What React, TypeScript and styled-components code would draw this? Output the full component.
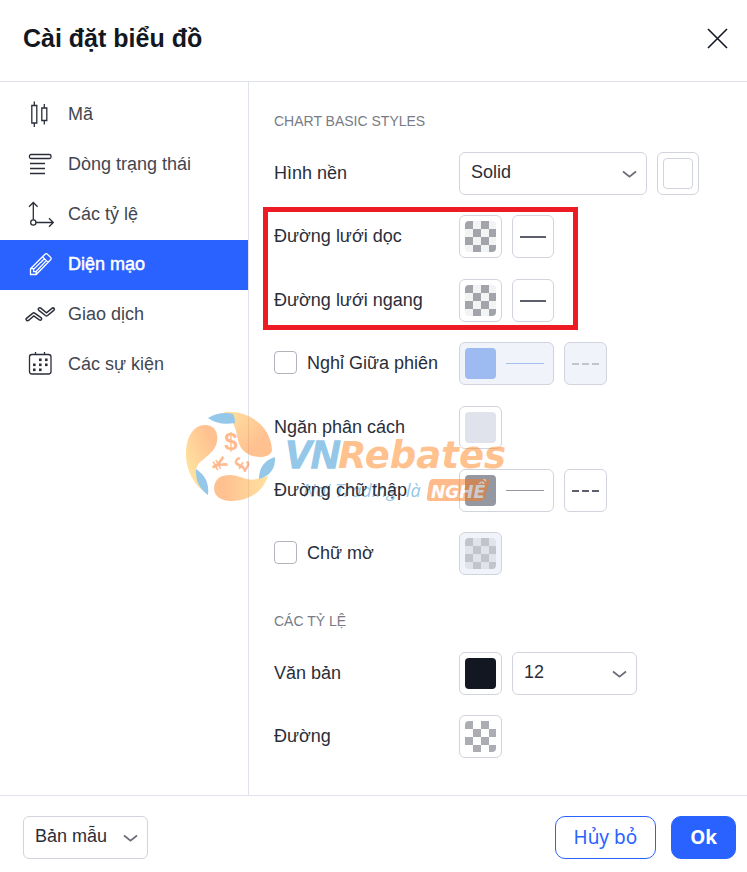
import React from "react";
import styled, { createGlobalStyle, css } from "styled-components";

const GlobalStyle = createGlobalStyle`
  *, *::before, *::after { box-sizing: border-box; }
  body {
    margin: 0;
    background: #fff;
    color: #2a2e39;
    font-family: "Liberation Sans", Arial, sans-serif;
    font-size: 18px;
    line-height: 24px;
  }
  button, select, input { font: inherit; color: inherit; margin: 0; }
`;

const Dialog = styled.div`
  position: relative;
  display: flex;
  flex-direction: column;
  min-height: 100vh;
`;

const Header = styled.header`
  display: flex;
  align-items: center;
  justify-content: space-between;
  padding: 20px 16px 24px 23px;
  border-bottom: 1px solid #e0e3eb;
`;

const Title = styled.h1`
  margin: 0;
  font-size: 25px;
  line-height: 37px;
  font-weight: 700;
  color: #131722;
`;

const CloseButton = styled.button`
  display: flex;
  padding: 3px;
  border: 0;
  background: none;
  color: #131722;
  cursor: pointer;
`;

const Body = styled.div`
  flex: 1;
  display: grid;
  grid-template-columns: 249px minmax(0, 1fr);
`;

const Sidebar = styled.nav`
  display: flex;
  flex-direction: column;
  padding-top: 8px;
  border-right: 1px solid #e0e3eb;
`;

const NavItem = styled.button<{ $active?: boolean }>`
  display: grid;
  grid-template-columns: 32px 1fr;
  align-items: center;
  gap: 12px;
  height: 50px;
  padding: 0 12px 2px 24px;
  border: 0;
  text-align: left;
  cursor: pointer;
  background: ${(p) => (p.$active ? "#2962ff" : "transparent")};
  color: ${(p) => (p.$active ? "#fff" : "#434651")};
  -webkit-text-stroke: ${(p) => (p.$active ? "0.5px #fff" : "0")};

  svg { color: ${(p) => (p.$active ? "#fff" : "#2a2e39")}; }
`;

const Content = styled.main`
  display: flex;
  flex-direction: column;
  gap: 20px;
  padding: 29px 25px 36px;
`;

const SectionTitle = styled.h2`
  margin: 0;
  font-size: 14px;
  line-height: 21px;
  font-weight: 400;
  color: #787b86;
`;

const SecondTitle = styled(SectionTitle)`
  margin-top: 16px;
`;

const Group = styled.div`
  position: relative;
  display: flex;
  flex-direction: column;
  gap: 21px;
  align-self: flex-start;
`;

const Highlight = styled.span`
  position: absolute;
  inset: -8px -24px -8px -11px;
  border: 5px solid #ed1c24;
  pointer-events: none;
`;

const Row = styled.div`
  display: grid;
  grid-template-columns: 185px auto;
  align-items: center;
  justify-content: start;
`;

const Label = styled.label`
  position: relative;
  z-index: 2;
  display: flex;
  align-items: center;
  gap: 10px;
  padding-bottom: 2px;
`;

const Checkbox = styled.input`
  appearance: none;
  width: 23px;
  height: 23px;
  border: 1px solid #b2b5be;
  border-radius: 4px;
  background: #fff;
  cursor: pointer;

  &:checked { background: #2962ff; }
`;

const Controls = styled.div`
  display: flex;
  gap: 10px;
`;

const box = css`
  height: 43px;
  border: 1px solid #d1d4dc;
  border-radius: 6px;
  background: #fff;
`;

const BoxButton = styled.button<{ $size?: "wide" | "narrow" }>`
  ${box}
  display: flex;
  align-items: center;
  justify-content: ${(p) => (p.$size === "wide" ? "flex-start" : "center")};
  gap: 10px;
  width: ${(p) => (p.$size === "wide" ? "95px" : p.$size === "narrow" ? "42px" : "43px")};
  padding: 0 5px;
  cursor: pointer;

  &:disabled { background: #f0f3fa; cursor: default; }
`;

const Swatch = styled.span<{ $color: string; $outlined?: boolean }>`
  flex: none;
  width: ${(p) => (p.$outlined ? "30px" : "31px")};
  height: 31px;
  border-radius: 4px;
  background: ${(p) => p.$color};
  border: ${(p) => (p.$outlined ? "1px solid #d1d4dc" : "0")};
`;

const Checker = styled(Swatch)<{ $dark: string }>`
  background: repeating-conic-gradient(${(p) => p.$color} 0 25%, ${(p) => p.$dark} 0 50%) 0 0 / 16px 16px;
`;

const Stroke = styled.span<{ $color: string; $thin?: boolean }>`
  width: ${(p) => (p.$thin ? "38px" : "26px")};
  border-top: ${(p) => (p.$thin ? "1px" : "2px")} solid ${(p) => p.$color};
`;

const Dashes = styled.span<{ $color: string }>`
  flex: none;
  width: 27px;
  height: 2px;
  background: repeating-linear-gradient(90deg, ${(p) => p.$color} 0 7px, transparent 7px 10px);
`;

const SelectFrame = styled.div<{ $width: number }>`
  position: relative;
  width: ${(p) => p.$width}px;

  svg {
    position: absolute;
    right: 10px;
    top: 18px;
    pointer-events: none;
  }
`;

const Select = styled.select`
  ${box}
  appearance: none;
  display: block;
  width: 100%;
  padding: 0 28px 3px 11px;
  cursor: pointer;
`;

const Footer = styled.footer`
  display: flex;
  align-items: center;
  justify-content: space-between;
  padding: 20px 11px 13px 23px;
  border-top: 1px solid #e0e3eb;
`;

const Actions = styled.div`
  display: flex;
  gap: 15px;
`;

const ActionButton = styled.button<{ $primary?: boolean }>`
  height: 43px;
  padding: 0 18px 2px;
  border: 1px solid #2962ff;
  border-radius: 10px;
  font-family: "Noto Sans", sans-serif;
  font-size: 19px;
  font-weight: ${(p) => (p.$primary ? 700 : 400)};
  background: ${(p) => (p.$primary ? "#2962ff" : "#fff")};
  color: ${(p) => (p.$primary ? "#fff" : "#2962ff")};
  cursor: pointer;
`;

const WatermarkLayer = styled.svg`
  position: absolute;
  left: 184px;
  top: 408px;
  z-index: 1;
  opacity: 0.5;
  pointer-events: none;
`;

const Icon = ({ children }: { children: React.ReactNode }) => (
  <svg width="32" height="32" viewBox="0 0 32 32" fill="none" stroke="currentColor" strokeWidth="1.3" aria-hidden="true">
    {children}
  </svg>
);

const CandlesIcon = () => (
  <Icon>
    <path d="M7.8 7.5h5v17.5h-5zM10.3 3.5v4M10.3 25v4M17.8 10h5v12.500h-5zM20.300 6v4M20.300 22.500v4" />
  </Icon>
);

const StatusIcon = () => (
  <Icon>
    <rect x="5.500" y="6.500" width="21.500" height="4" rx="1.500" />
    <path d="M6 15.500h15M6 20.500h15M6 25.500h15" />
  </Icon>
);

const ScalesIcon = () => (
  <Icon>
    <circle cx="9.300" cy="24.500" r="2.600" />
    <path d="M9.300 21.800V4.500M5 8.800l4.300-4.300 4.300 4.300M12 24.500h17M25 20.200l4.300 4.300-4.300 4.300" />
  </Icon>
);

const PencilIcon = () => (
  <Icon>
    <path d="M6.500 26.500v-5.800L21 6.200q1.200-1.200 2.400 0l3.200 3.200q1.200 1.200 0 2.400L12.200 26.500zM18.500 8.800l5.600 5.600M9.600 21.400L20.400 10.700M11.900 23.700L22.300 12.600M6.800 20.700h2.800v2.900h2.600v2.700" />
  </Icon>
);

const TradeIcon = () => (
  <Icon>
    <path strokeWidth="1.500" d="M2.500 20.300 8.600 15.300q1.200-.9 2.400 0l6 4.300q1.200 1 .4 2t-2.100.2L9.800 18l-5 4.200q-1.300 1-2.400-.1-.9-1 .1-1.800z" />
    <path strokeWidth="1.500" d="M14.700 10.300q1-1 2.100-.1l5.700 4.600 5.400-4.500q1.200-.9 2.200.1.800 1-.3 1.900l-6.200 5.200q-1.100.8-2.200 0l-6.500-5.200q-1.200-1-.2-2z" />
  </Icon>
);

const CalendarIcon = () => (
  <Icon>
    <rect x="5.500" y="6.500" width="21.500" height="19.500" rx="2.500" />
    <path d="M11.500 4v3M20.500 4v3" />
    <g fill="currentColor" stroke="none">
      {[[15, 10.5], [21, 10.5], [9, 15.5], [15, 15.5], [21, 15.5], [9, 20.5], [15, 20.5]].map(([x, y]) => (
        <rect key={`${x}-${y}`} x={x} y={y} width="2.600" height="2.600" />
      ))}
    </g>
  </Icon>
);

const Chevron = () => (
  <svg width="15" height="9" viewBox="0 0 15 9" fill="none" stroke="#6a6d78" strokeWidth="1.700" aria-hidden="true">
    <path d="M1 1.500l6.500 5.200L14 1.500" />
  </svg>
);

const Watermark = () => (
  <WatermarkLayer width="330" height="98" viewBox="0 0 330 98" aria-label="VNRebates">
    <defs>
      <linearGradient id="flame-top" x1="0" y1="0" x2="1" y2="1">
        <stop offset="0" stopColor="#ffc444" />
        <stop offset="0.700" stopColor="#ff8424" />
      </linearGradient>
      <linearGradient id="flame-left" x1="1" y1="0" x2="0" y2="1">
        <stop offset="0.200" stopColor="#ff8424" />
        <stop offset="0.800" stopColor="#ffc444" />
      </linearGradient>
      <linearGradient id="flame-bottom" x1="0" y1="0" x2="1" y2="0">
        <stop offset="0.200" stopColor="#ff8424" />
        <stop offset="1" stopColor="#ffc444" />
      </linearGradient>
    </defs>
    <path fill="url(#flame-top)" d="M40 4C66 2 87 19 88 42 87 50 73 51 64 46 50 38 56 24 47 12z" />
    <path fill="url(#flame-left)" d="M21 17C31 17 36 26 32 37 27 50 13 51 12 63L18 82C1 68-1 43 5 29 9 21 14 17 21 17z" />
    <path fill="url(#flame-bottom)" d="M30 80C31 70 37 67 46 67 57 67 64 75 76 70L84 68C79 84 65 93 47 93 37 93 30 88 30 80z" />
    <path fill="#2b91d3" d="M24 10Q36 3 49 6 51 9 51 15 35 18 24 10z" />
    <path fill="#2b91d3" d="M91 49Q92 66 75 71 75 54 91 49z" />
    <path fill="#2b91d3" d="M12 61Q26 70 24 87 11 78 12 61z" />
    <g fill="#ff7620" fontFamily="Liberation Sans, sans-serif" fontWeight="700" textAnchor="middle">
      <text x="47" y="42" fontSize="24">$</text>
      <text x="35" y="63" fontSize="21" transform="rotate(62 35 56)">¥</text>
      <text x="58" y="63" fontSize="21" transform="rotate(-60 58 56)">£</text>
    </g>
    <text x="101" y="60" fill="#2b91d3" fontFamily="Liberation Sans, sans-serif" fontWeight="700" fontStyle="italic" fontSize="39" stroke="#2b91d3" strokeWidth="1.500">
      VN
    </text>
    <text x="154" y="60" fill="#ff8420" fontFamily="DejaVu Sans, sans-serif" fontWeight="700" fontStyle="italic" fontSize="37">
      Rebates
    </text>
    <g fill="#2b91d3" fontFamily="Open Sans, sans-serif" fontStyle="italic" fontSize="18">
      <text x="119" y="89">Nơi Trading</text>
      <text x="222" y="89">là</text>
    </g>
    <path fill="#ff7a1a" d="M249 71h53q4 0 3 4l-4 14q-1 4-5 4h-50q-4 0-3-4l2-14q1-4 4-4z" />
    <text x="247" y="90" fill="#fff" fontFamily="DejaVu Sans, sans-serif" fontWeight="700" fontStyle="italic" fontSize="17">
      NGHỀ
    </text>
  </WatermarkLayer>
);

const navItems = [
  { label: "Mã", icon: <CandlesIcon /> },
  { label: "Dòng trạng thái", icon: <StatusIcon /> },
  { label: "Các tỷ lệ", icon: <ScalesIcon /> },
  { label: "Diện mạo", icon: <PencilIcon />, active: true },
  { label: "Giao dịch", icon: <TradeIcon /> },
  { label: "Các sự kiện", icon: <CalendarIcon /> },
];

const Dropdown = ({ id, width, options, label }: { id?: string; width: number; options: string[]; label?: string }) => (
  <SelectFrame $width={width}>
    <Select id={id} aria-label={label}>
      {options.map((o) => (
        <option key={o}>{o}</option>
      ))}
    </Select>
    <Chevron />
  </SelectFrame>
);

const GridLineRow = ({ id, label }: { id: string; label: string }) => (
  <Row>
    <Label htmlFor={id}>{label}</Label>
    <Controls>
      <BoxButton id={id}>
        <Checker $color="#f2f4f3" $dark="#a3a4aa" />
      </BoxButton>
      <BoxButton $size="narrow" aria-label={`${label} – kiểu`}>
        <Stroke $color="#5d606b" />
      </BoxButton>
    </Controls>
  </Row>
);

export default function App() {
  return (
    <Dialog role="dialog" aria-labelledby="dialog-title">
      <GlobalStyle />
      <Header>
        <Title id="dialog-title">Cài đặt biểu đồ</Title>
        <CloseButton aria-label="Đóng">
          <svg width="21" height="21" viewBox="0 0 21 21" stroke="currentColor" strokeWidth="1.600" aria-hidden="true">
            <path d="M1 1l19 19M20 1L1 20" />
          </svg>
        </CloseButton>
      </Header>
      <Body>
        <Sidebar>
          {navItems.map((item) => (
            <NavItem key={item.label} $active={item.active} aria-current={item.active ? "page" : undefined}>
              {item.icon}
              <span>{item.label}</span>
            </NavItem>
          ))}
        </Sidebar>
        <Content>
          <SectionTitle>CHART BASIC STYLES</SectionTitle>
          <Row>
            <Label htmlFor="background">Hình nền</Label>
            <Controls>
              <Dropdown id="background" width={188} options={["Solid", "Gradient"]} />
              <BoxButton $size="narrow" aria-label="Màu nền">
                <Swatch $color="#fff" $outlined />
              </BoxButton>
            </Controls>
          </Row>
          <Group>
            <GridLineRow id="vertical" label="Đường lưới dọc" />
            <GridLineRow id="horizontal" label="Đường lưới ngang" />
            <Highlight />
          </Group>
          <Group>
            <Row>
              <Label>
                <Checkbox type="checkbox" />
                Nghỉ Giữa phiên
              </Label>
              <Controls>
                <BoxButton $size="wide" disabled aria-label="Màu nghỉ giữa phiên">
                  <Swatch $color="#9dbbf0" />
                  <Stroke $thin $color="#a9bfed" />
                </BoxButton>
                <BoxButton disabled aria-label="Kiểu nghỉ giữa phiên">
                  <Dashes $color="#c3c5cc" />
                </BoxButton>
              </Controls>
            </Row>
            <Row>
              <Label htmlFor="separator">Ngăn phân cách</Label>
              <Controls>
                <BoxButton id="separator">
                  <Swatch $color="#e0e3eb" />
                </BoxButton>
              </Controls>
            </Row>
          </Group>
          <Row>
            <Label htmlFor="crosshair">Đường chữ thập</Label>
            <Controls>
              <BoxButton $size="wide" id="crosshair">
                <Swatch $color="#9598a1" />
                <Stroke $thin $color="#9598a1" />
              </BoxButton>
              <BoxButton aria-label="Kiểu đường chữ thập">
                <Dashes $color="#5d606b" />
              </BoxButton>
            </Controls>
          </Row>
          <Row>
            <Label>
              <Checkbox type="checkbox" />
              Chữ mờ
            </Label>
            <Controls>
              <BoxButton disabled aria-label="Màu chữ mờ">
                <Checker $color="#e0e3e8" $dark="#c1c4cb" />
              </BoxButton>
            </Controls>
          </Row>
          <SecondTitle>CÁC TỶ LỆ</SecondTitle>
          <Row>
            <Label htmlFor="text-color">Văn bản</Label>
            <Controls>
              <BoxButton id="text-color">
                <Swatch $color="#131722" />
              </BoxButton>
              <Dropdown width={125} options={["12", "14", "16"]} label="Cỡ chữ" />
            </Controls>
          </Row>
          <Row>
            <Label htmlFor="line-color">Đường</Label>
            <Controls>
              <BoxButton id="line-color">
                <Checker $color="#fff" $dark="#acadb3" />
              </BoxButton>
            </Controls>
          </Row>
        </Content>
      </Body>
      <Footer>
        <Dropdown width={125} options={["Bản mẫu"]} label="Bản mẫu" />
        <Actions>
          <ActionButton>Hủy bỏ</ActionButton>
          <ActionButton $primary>Ok</ActionButton>
        </Actions>
      </Footer>
      <Watermark />
    </Dialog>
  );
}
